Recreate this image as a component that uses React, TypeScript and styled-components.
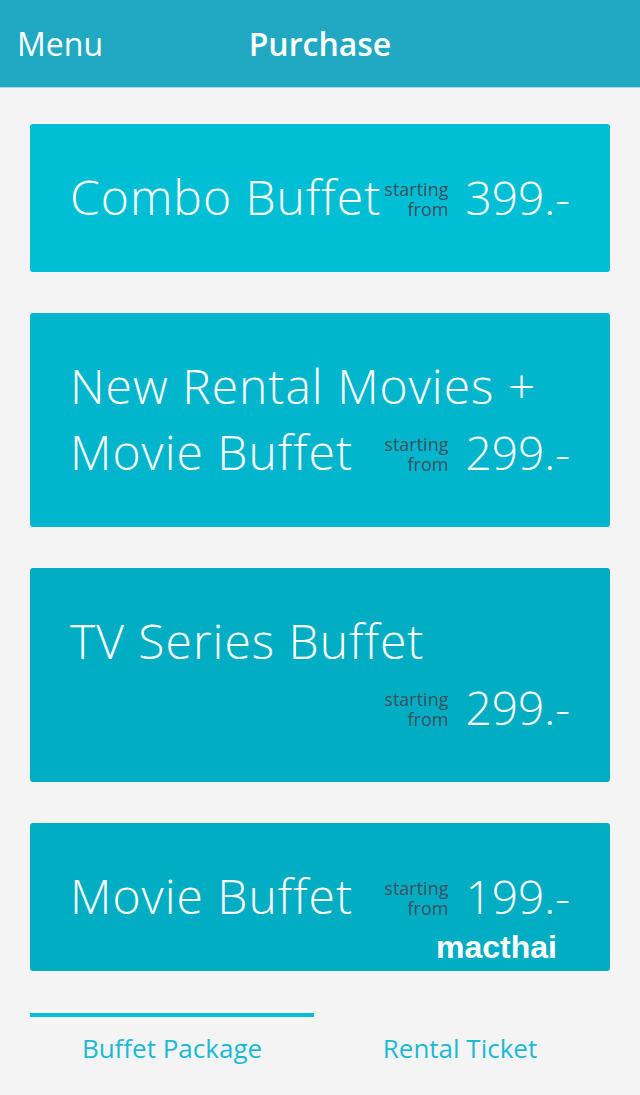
import React from 'react';
import styled, { createGlobalStyle } from 'styled-components';

const GlobalStyle = createGlobalStyle`
  html, body {
    margin: 0;
    padding: 0;
    background: #f4f4f4;
    font-family: "Open Sans", "Noto Sans", sans-serif;
  }
`;

type Pack = {
  title: string;
  price: string;
  tone: string;
  mark?: boolean;
};

const packs: Pack[] = [
  { title: 'Combo Buffet', price: '399.-', tone: '#00bfd5' },
  { title: 'New Rental Movies + Movie Buffet', price: '299.-', tone: '#00b5cc' },
  { title: 'TV Series Buffet', price: '299.-', tone: '#00adc3' },
  { title: 'Movie Buffet', price: '199.-', tone: '#00adc3', mark: true },
];

const PackCard = ({ pack }: { pack: Pack }) => (
  <Card $tone={pack.tone}>
    <Title>{pack.title}</Title>
    <Price>
      <From>
        starting
        <br />
        from
      </From>
      <Amount>{pack.price}</Amount>
    </Price>
    {pack.mark && <Watermark>macthai</Watermark>}
  </Card>
);

export default function App() {
  return (
    <Page>
      <GlobalStyle />
      <Header>
        <MenuLink>Menu</MenuLink>
        <HeaderTitle>Purchase</HeaderTitle>
      </Header>
      <List>
        {packs.map((p) => (
          <PackCard key={p.title} pack={p} />
        ))}
      </List>
      <Tabs>
        <Tab $active>Buffet Package</Tab>
        <Tab>Rental Ticket</Tab>
      </Tabs>
    </Page>
  );
}

const Page = styled.div`
  width: 640px;
  min-height: 1095px;
  background: #f4f4f4;
  display: flex;
  flex-direction: column;
`;

const Header = styled.header`
  position: relative;
  height: 87px;
  background: #21a9c4;
  border-bottom: 1px solid #a9dbe5;
  display: flex;
  align-items: center;
  justify-content: center;
  color: #fff;
`;

const MenuLink = styled.span`
  position: absolute;
  left: 17px;
  top: 0;
  line-height: 87px;
  font-size: 32px;
  font-weight: 400;
`;

const HeaderTitle = styled.h1`
  margin: 0;
  font-size: 32px;
  font-weight: 600;
`;

const List = styled.div`
  display: flex;
  flex-direction: column;
  gap: 41px;
  padding: 36px 30px 0;
`;

const Card = styled.div<{ $tone: string }>`
  position: relative;
  background: ${(p) => p.$tone};
  border-radius: 3px;
  padding: 40px 40px 42px;
  color: #fff;
  font-size: 48px;
  line-height: 66px;
  overflow: hidden;
`;

const Title = styled.span`
  font-weight: 300;
  letter-spacing: 1px;
`;

const Price = styled.div`
  float: right;
  display: flex;
  align-items: center;
  gap: 17px;
  height: 66px;
`;

const From = styled.span`
  font-size: 18px;
  line-height: 20px;
  text-align: right;
  color: #3d5261;
  margin-top: 4px;
`;

const Amount = styled.span`
  font-size: 46px;
  font-weight: 300;
  line-height: 66px;
`;

const Watermark = styled.span`
  position: absolute;
  right: 53px;
  bottom: 6px;
  font-family: "Liberation Sans", Arial, sans-serif;
  font-weight: 700;
  font-size: 32px;
  line-height: 36px;
  color: #fff;
`;

const Tabs = styled.nav`
  display: grid;
  grid-template-columns: 284px 292px;
  padding: 42px 30px 0;
`;

const Tab = styled.div<{ $active?: boolean }>`
  border-top: 4px solid ${(p) => (p.$active ? '#00bfd5' : 'transparent')};
  text-align: center;
  padding-top: 13px;
  font-size: 26px;
  line-height: 36px;
  color: #1bbad3;
`;
